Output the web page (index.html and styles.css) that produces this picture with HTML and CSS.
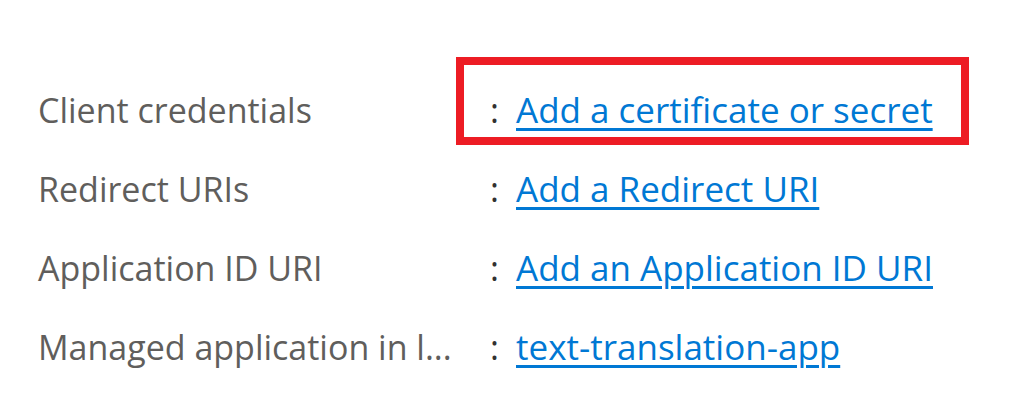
FILE: index.html
```html
<!DOCTYPE html>
<html>
<head>
<meta charset="utf-8">
<link rel="stylesheet" href="styles.css">
</head>
<body>
<div class="props">
  <div class="row">
    <div class="label">Client credentials</div>
    <div class="sep">:</div>
    <div class="value"><a href="#">Add a certificate or secret</a></div>
    <div class="mark"></div>
  </div>
  <div class="row">
    <div class="label">Redirect URIs</div>
    <div class="sep">:</div>
    <div class="value"><a href="#">Add a Redirect URI</a></div>
  </div>
  <div class="row">
    <div class="label">Application ID URI</div>
    <div class="sep">:</div>
    <div class="value"><a href="#">Add an Application ID URI</a></div>
  </div>
  <div class="row">
    <div class="label">Managed application in l...</div>
    <div class="sep">:</div>
    <div class="value"><a href="#">text-translation-app</a></div>
  </div>
</div>
</body>
</html>
```

FILE: styles.css
```css
html, body {
  margin: 0;
  padding: 0;
  background: #ffffff;
}
body {
  font-family: "Open Sans", "Noto Sans", sans-serif;
  font-size: 34px;
}
.props {
  padding: 70px 0 0 38px;
  display: flex;
  flex-direction: column;
}
.row {
  position: relative;
  display: flex;
  align-items: center;
  height: 79px;
  line-height: 48px;
}
.label {
  width: 440px;
  flex: none;
  color: #605e5c;
  white-space: nowrap;
}
.sep {
  width: 26px;
  flex: none;
  padding-left: 12px;
  color: #323130;
}
.value a {
  font-size: 35px;
  color: #0078d4;
  text-decoration: underline;
  text-decoration-thickness: 3px;
  text-underline-offset: 5px;
  white-space: nowrap;
}
.mark {
  position: absolute;
  left: 418px;
  top: -13px;
  width: 497px;
  height: 72px;
  border: 8px solid #ed1c24;
}
```
